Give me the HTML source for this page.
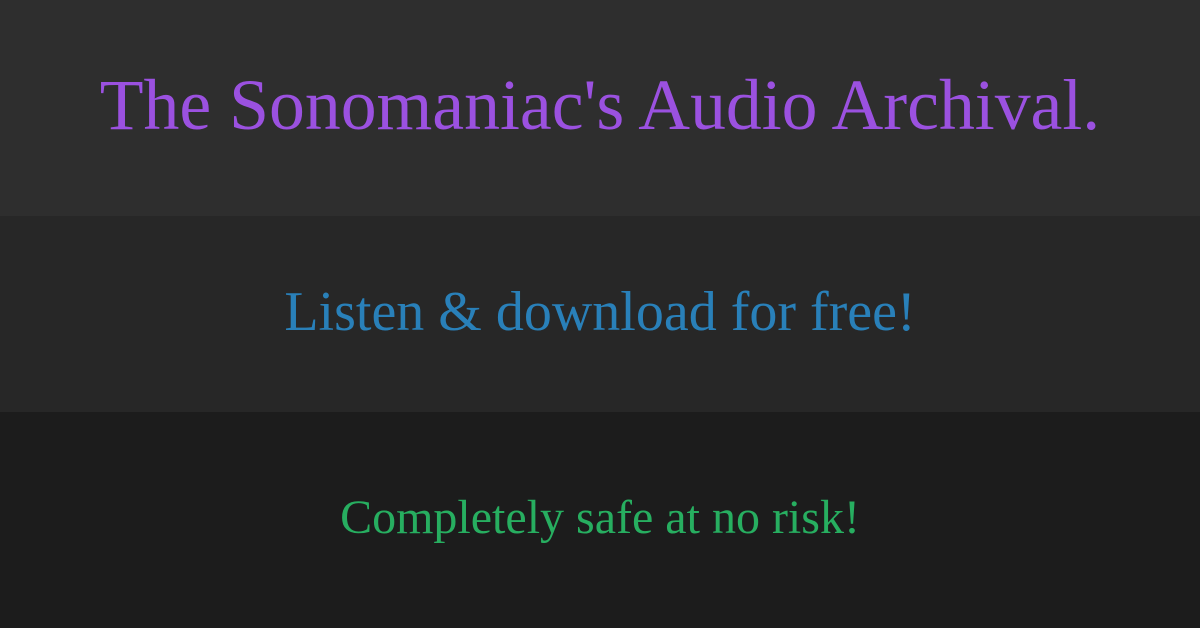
<!DOCTYPE html>
<html><head><style>
html,body{margin:0;padding:0;width:1200px;height:628px;overflow:hidden;font-family:"Liberation Serif",serif;}
.b{position:absolute;left:0;width:1200px;}
.t{position:absolute;left:0;width:1200px;text-align:center;white-space:nowrap;line-height:1;}
</style></head><body>
<div class="b" style="top:0;height:216px;background:#2e2e2e"></div>
<div class="b" style="top:216px;height:196px;background:#272727"></div>
<div class="b" style="top:412px;height:216px;background:#1c1c1c"></div>
<div class="t" style="top:70px;font-size:71.7px;color:#9b51e0">The Sonomaniac's Audio Archival.</div>
<div class="t" style="top:284px;font-size:56px;color:#2980b9">Listen &amp; download for free!</div>
<div class="t" style="top:494px;font-size:48px;color:#27ae60">Completely safe at no risk!</div>
</body></html>
